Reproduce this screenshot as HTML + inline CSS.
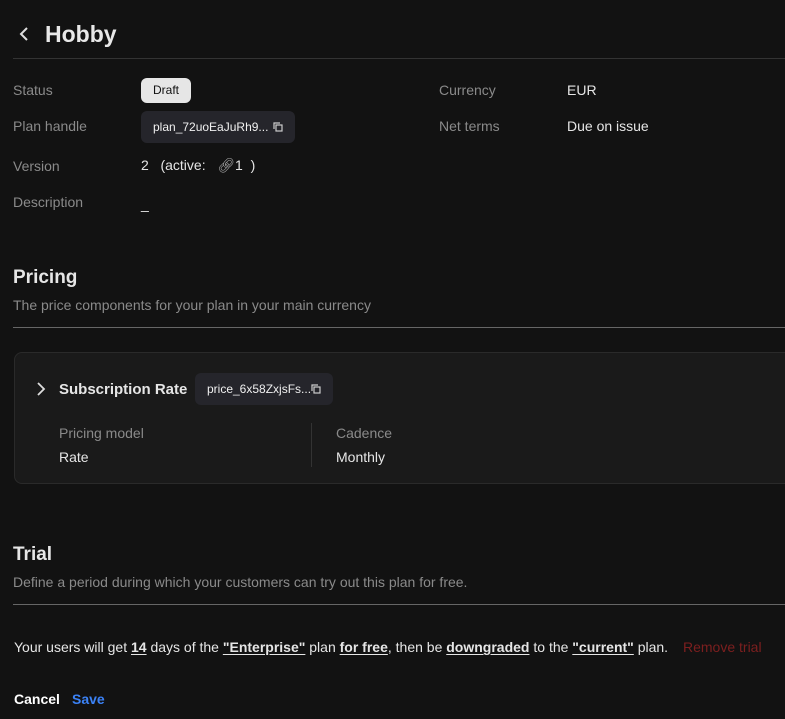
<!DOCTYPE html>
<html><head><style>
*{margin:0;padding:0;box-sizing:border-box}
body{width:785px;height:719px;background:#121212;color:#e6e6e6;font-family:"Liberation Sans",sans-serif;font-size:14px;position:relative;overflow:hidden}
.a{position:absolute;white-space:nowrap}
.l{color:#8a8a8a}
.pill{position:absolute;background:#25252b;border-radius:6px;color:#f0f0f0;font-size:12px}
u{text-underline-offset:2px}
</style></head><body>
<svg class="a" style="left:18px;top:26px" width="14" height="16" viewBox="0 0 14 16"><path d="M9 2L3 8l6 6" stroke="#ddd" stroke-width="2" fill="none"/></svg>
<div class="a" style="left:45px;top:21px;font-size:23px;font-weight:bold;color:#e8e8e8">Hobby</div>
<div class="a" style="left:13px;top:58px;width:772px;height:1px;background:#333"></div>

<div class="a l" style="left:13px;top:82px">Status</div>
<div class="a" style="left:141px;top:78px;width:50px;height:25px;background:#e6e6e6;border-radius:6px;color:#111;font-size:12px;text-align:center;line-height:25px">Draft</div>
<div class="a l" style="left:13px;top:118px">Plan handle</div>
<div class="pill" style="left:141px;top:111px;width:154px;height:32px;line-height:32px;padding-left:12px">plan_72uoEaJuRh9...</div>
<svg class="a" style="left:273px;top:122px" width="10" height="10" viewBox="0 0 10 10"><rect x="3" y="3" width="6" height="6" stroke="#ccc" fill="none" stroke-width="1.2"/><path d="M1 7V1h6" stroke="#ccc" fill="none" stroke-width="1.2"/></svg>
<div class="a l" style="left:13px;top:158px">Version</div>
<div class="a" style="left:141px;top:157px">2 &nbsp; (active: &nbsp; <span style="color:#aaa">&#128279;&#xFE0E;</span>1 &nbsp;)</div>
<div class="a l" style="left:13px;top:194px">Description</div>
<div class="a" style="left:141px;top:196px">_</div>
<div class="a l" style="left:439px;top:82px">Currency</div>
<div class="a" style="left:567px;top:82px">EUR</div>
<div class="a l" style="left:439px;top:118px">Net terms</div>
<div class="a" style="left:567px;top:118px">Due on issue</div>

<div class="a" style="left:13px;top:267px;font-size:19px;font-weight:bold">Pricing</div>
<div class="a l" style="left:13px;top:297px">The price components for your plan in your main currency</div>
<div class="a" style="left:13px;top:327px;width:772px;height:1px;background:#666"></div>

<div class="a" style="left:14px;top:352px;width:790px;height:132px;background:#1a1a1a;border:1px solid #2a2a2a;border-radius:8px"></div>
<svg class="a" style="left:36px;top:382px" width="10" height="14" viewBox="0 0 10 14"><path d="M2 1l6 6-6 6" stroke="#ddd" stroke-width="1.8" fill="none"/></svg>
<div class="a" style="left:59px;top:381px;font-size:15px;font-weight:bold">Subscription Rate</div>
<div class="pill" style="left:195px;top:373px;width:138px;height:32px;line-height:32px;padding-left:12px">price_6x58ZxjsFs...</div>
<svg class="a" style="left:311px;top:384px" width="10" height="10" viewBox="0 0 10 10"><rect x="3" y="3" width="6" height="6" stroke="#ccc" fill="none" stroke-width="1.2"/><path d="M1 7V1h6" stroke="#ccc" fill="none" stroke-width="1.2"/></svg>
<div class="a l" style="left:59px;top:425px">Pricing model</div>
<div class="a" style="left:59px;top:449px">Rate</div>
<div class="a" style="left:311px;top:423px;width:1px;height:44px;background:#333"></div>
<div class="a l" style="left:336px;top:425px">Cadence</div>
<div class="a" style="left:336px;top:449px">Monthly</div>

<div class="a" style="left:13px;top:544px;font-size:19px;font-weight:bold">Trial</div>
<div class="a l" style="left:13px;top:574px">Define a period during which your customers can try out this plan for free.</div>
<div class="a" style="left:13px;top:604px;width:772px;height:1px;background:#666"></div>

<div class="a" style="left:14px;top:639px">Your users will get <b><u>14</u></b> days of the <b><u>"Enterprise"</u></b> plan <b><u>for free</u></b>, then be <b><u>downgraded</u></b> to the <b><u>"current"</u></b> plan.</div>
<div class="a" style="left:683px;top:639px;color:#7d1f1f">Remove trial</div>
<div class="a" style="left:14px;top:691px;font-weight:bold;color:#fff">Cancel</div>
<div class="a" style="left:72px;top:691px;font-weight:bold;color:#3b82f6">Save</div>
</body></html>
